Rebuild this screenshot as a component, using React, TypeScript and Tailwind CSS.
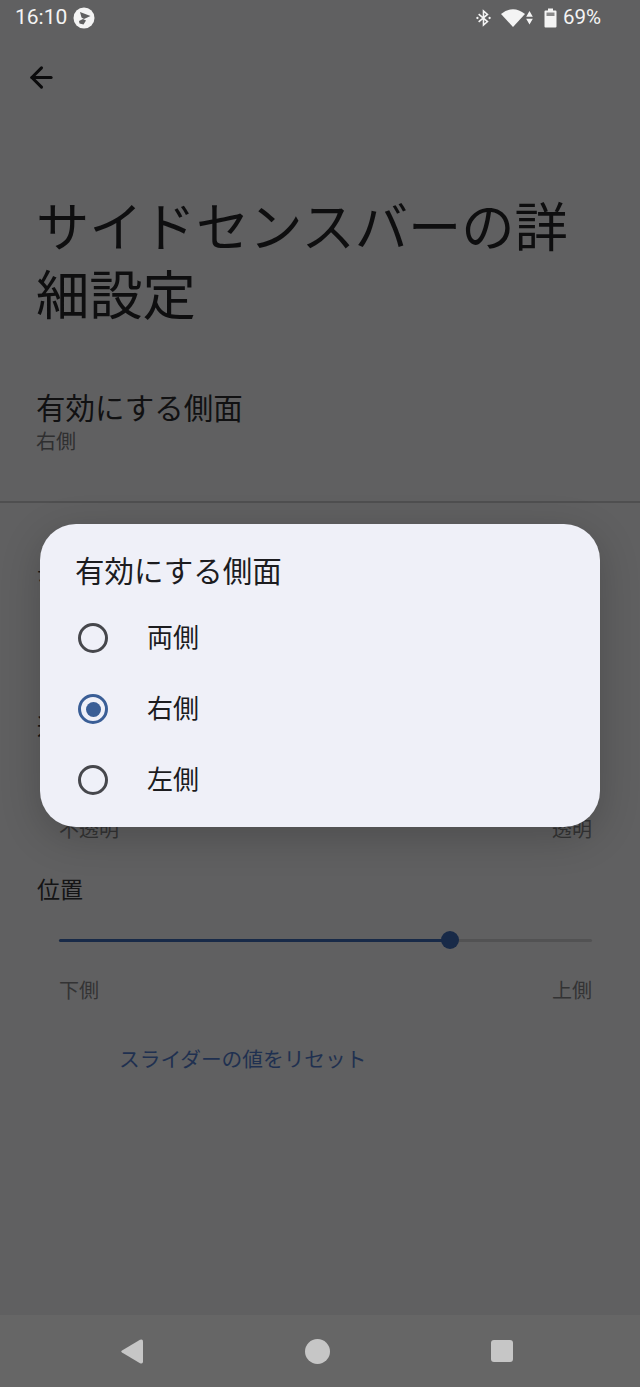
import { ArrowLeft } from 'lucide-react'

const font = { fontFamily: '"Roboto", "Noto Sans CJK JP", sans-serif' }

function StatusBar() {
  return (
    <div className="flex h-[35px] items-center justify-between pl-[15px] pr-[39px] text-[21px] text-[#f4f4f4]">
      <div className="flex items-center gap-[6px]">
        <span className="leading-none">16:10</span>
        <svg width="22" height="22" viewBox="0 0 22 22">
          <circle cx="11" cy="11" r="10.5" fill="#f4f4f4" />
          <path d="M7 5 L17.5 9 L11 12 L8.5 10.5 Z" fill="#606061" />
          <path d="M6 14 L10 12 L13 13.5 L10.5 17.5 L6.5 16.5 Z" fill="#606061" />
        </svg>
      </div>
      <div className="flex items-center">
        <svg width="15" height="20" viewBox="0 0 17 20" fill="none" stroke="#f4f4f4" strokeWidth="1.8" className="mr-[10px]">
          <path d="M3 5.5 L13 14 L8.5 18 V2 L13 6 L3 14.5" />
          <circle cx="1.6" cy="10" r="1.3" fill="#f4f4f4" stroke="none" />
          <circle cx="15.4" cy="10" r="1.3" fill="#f4f4f4" stroke="none" />
        </svg>
        <svg width="24" height="19" viewBox="0 0 24 19" className="mr-[1px]">
          <path d="M0 6 Q12 -3.5 24 6 L12 19 Z" fill="#f4f4f4" />
        </svg>
        <svg width="7" height="19" viewBox="0 0 8 19" className="mr-[11px]">
          <path d="M4 2 L7.8 8.5 H0.2 Z M4 17.5 L0.2 11 H7.8 Z" fill="#f4f4f4" />
        </svg>
        <svg width="13" height="20" viewBox="0 0 13 20" className="mr-[6px]">
          <path d="M4 0.5 H9 V2.5 H11.5 Q12.5 2.5 12.5 3.5 V18.5 Q12.5 19.5 11.5 19.5 H1.5 Q0.5 19.5 0.5 18.5 V3.5 Q0.5 2.5 1.5 2.5 H4 Z" fill="#f4f4f4" />
          <rect x="2.5" y="4.5" width="8" height="3.5" fill="#8a8a8a" />
        </svg>
        <span className="text-[20.5px] leading-none">69%</span>
      </div>
    </div>
  )
}

function LabeledSlider({ percent, left, right }: { percent: number; left: string; right: string }) {
  return (
    <div className="pl-[59px] pr-[48px]">
      <div className="relative flex h-[20px] items-center">
        <div className="h-[3px] w-full rounded-full bg-[#525253]" />
        <div className="absolute left-0 h-[3px] rounded-full bg-[#182a48]" style={{ width: `${percent}%` }} />
        <div
          className="absolute h-[18px] w-[18px] -translate-x-1/2 rounded-full bg-[#182a48]"
          style={{ left: `${percent}%` }}
        />
      </div>
      <div className="mt-[29px] flex justify-between text-[20px] leading-[24px] text-[#333334]">
        <span>{left}</span>
        <span>{right}</span>
      </div>
    </div>
  )
}

function RadioRow({ label, checked }: { label: string; checked?: boolean }) {
  return (
    <div className="flex h-[71px] items-center pl-[38px]">
      <div
        className={
          checked
            ? 'flex h-[30px] w-[30px] items-center justify-center rounded-full border-[3px] border-[#3a5e96]'
            : 'h-[30px] w-[30px] rounded-full border-[3px] border-[#46474c]'
        }
      >
        {checked && <div className="h-[15px] w-[15px] rounded-full bg-[#3a5e96]" />}
      </div>
      <span className="ml-[39px] text-[26px] leading-none text-[#1c1c1f]">{label}</span>
    </div>
  )
}

export default function App() {
  return (
    <div style={font} className="relative flex h-[1387px] w-[640px] flex-col overflow-hidden bg-[#606061]">
      <StatusBar />

      <div className="flex h-[84px] items-center pl-[25px]">
        <ArrowLeft size={33} strokeWidth={2.2} className="text-[#0b0b0c]" />
      </div>

      <h1 className="mt-[76px] pl-[36px] pr-[50px] text-[53.3px] leading-[68px] text-[#0e0e0f]">
        サイドセンスバーの詳細設定
      </h1>

      <div className="mt-[58px] pl-[36px]">
        <div className="text-[29.5px] leading-[40px] text-[#111112]">有効にする側面</div>
        <div className="text-[20px] leading-[26px] text-[#2f2f30]">右側</div>
      </div>

      <div className="mt-[46px] h-[2px] bg-[#4f4f50]" />

      <div className="mt-[51px] pl-[37px] text-[23px] leading-[36px] text-[#141415]">長</div>
      <div className="mt-[120px] pl-[37px] text-[23px] leading-[36px] text-[#141415]">透過度</div>

      <div className="mt-[38px]">
        <div className="h-[20px]" />
        <div className="mt-[14px] flex justify-between pl-[59px] pr-[48px] text-[20px] leading-[24px] text-[#333334]">
          <span>不透明</span>
          <span>透明</span>
        </div>
      </div>

      <div className="mt-[31px] pl-[37px] text-[23px] leading-[36px] text-[#141415]">位置</div>
      <div className="mt-[21px]">
        <LabeledSlider percent={73.4} left="下側" right="上側" />
      </div>

      <div className="mt-[42px] pl-[119px] text-[20.7px] leading-[30px] text-[#1f3050]">スライダーの値をリセット</div>

      <div className="absolute bottom-0 left-0 right-0 flex h-[72px] items-center bg-[#666666]">
        <div className="flex w-full items-center justify-between pl-[121px] pr-[127px]">
          <svg width="22" height="25" viewBox="0 0 22 25">
            <path d="M1 11.5 L19 0.8 Q22 -0.5 22 2.5 V22.5 Q22 25.5 19 24.2 L1 13.5 Q-0.5 12.5 1 11.5 Z" fill="#c6c6c6" />
          </svg>
          <div className="h-[25px] w-[25px] rounded-full bg-[#c6c6c6]" />
          <div className="h-[22px] w-[22px] rounded-[3px] bg-[#c6c6c6]" />
        </div>
      </div>

      <div className="absolute left-[40px] top-[524px] h-[303px] w-[560px] rounded-[36px] bg-[#eff0f8] shadow-[0_10px_40px_rgba(0,0,0,0.2)]">
        <div className="pl-[35px] pt-[28px] text-[29.5px] leading-[40px] text-[#1c1c1f]">有効にする側面</div>
        <div className="mt-[10.5px]">
          <RadioRow label="両側" />
          <RadioRow label="右側" checked />
          <RadioRow label="左側" />
        </div>
      </div>
    </div>
  )
}
